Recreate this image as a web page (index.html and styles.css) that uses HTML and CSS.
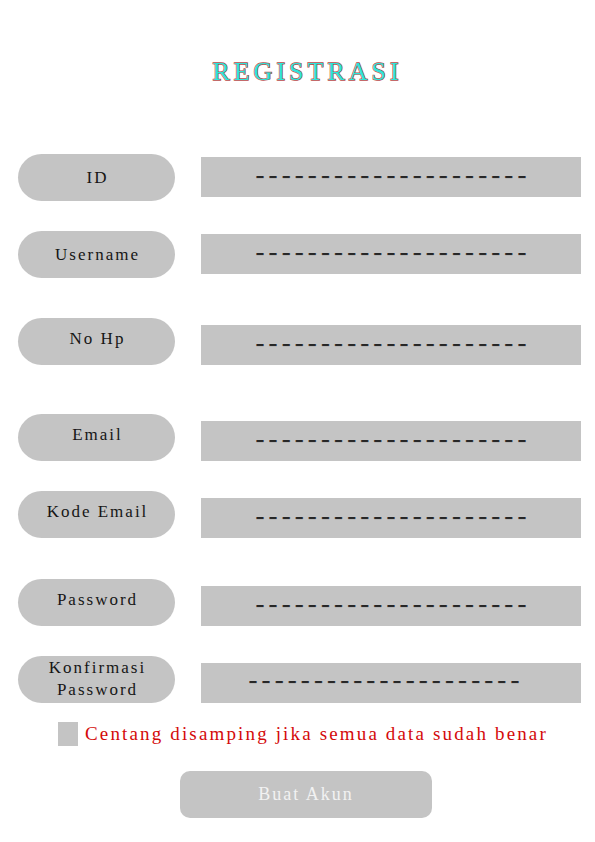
FILE: index.html
```html
<!DOCTYPE html>
<html lang="id">
<head>
    <meta charset="UTF-8">
    <meta name="viewport" content="width=device-width, initial-scale=1.0">
    <title>Registrasi</title>
    <link rel="stylesheet" href="styles.css">
</head>
<body>
    <h1 class="title">REGISTRASI</h1>

    <form class="form">
        <div class="row row-first row-short">
            <div class="label">ID</div>
            <div class="field">–––––––––––––––––––––</div>
        </div>
        <div class="row row-near row-short">
            <div class="label">Username</div>
            <div class="field">–––––––––––––––––––––</div>
        </div>
        <div class="row row-mid">
            <div class="label label-up">No Hp</div>
            <div class="field">–––––––––––––––––––––</div>
        </div>
        <div class="row row-far">
            <div class="label label-up">Email</div>
            <div class="field">–––––––––––––––––––––</div>
        </div>
        <div class="row row-near">
            <div class="label label-up">Kode Email</div>
            <div class="field">–––––––––––––––––––––</div>
        </div>
        <div class="row row-mid row-pass">
            <div class="label label-up">Password</div>
            <div class="field">–––––––––––––––––––––</div>
        </div>
        <div class="row row-near">
            <div class="label label-two">Konfirmasi<br>Password</div>
            <div class="field field-left">–––––––––––––––––––––</div>
        </div>

        <div class="check">
            <span class="box"></span>
            <span class="check-text">Centang disamping jika semua data sudah benar</span>
        </div>

        <div class="actions">
            <button type="button" class="btn">Buat Akun</button>
        </div>
    </form>
</body>
</html>
```

FILE: styles.css
```css
body {
    margin: 0;
    background: #ffffff;
    font-family: "Liberation Serif", "DejaVu Serif", serif;
}

.title {
    margin: 0;
    padding: 57px 0 0 20px;
    height: 33px;
    text-align: center;
    font-size: 26px;
    font-weight: normal;
    letter-spacing: 4px;
    color: #30e3d9;
    -webkit-text-stroke: 1.3px #b94848;
    paint-order: stroke fill;
}

.form {
    padding: 0 14px 0 18px;
}

.row {
    display: flex;
    align-items: flex-end;
    justify-content: space-between;
}

.row-first { margin-top: 64px; }
.row-near { margin-top: 30px; }
.row-mid { margin-top: 40px; }
.row-far { margin-top: 49px; }
.row-pass { margin-top: 41px; }

.label {
    width: 157px;
    height: 47px;
    border-radius: 24px;
    background: #c4c4c4;
    display: flex;
    align-items: center;
    justify-content: center;
    color: #161616;
    font-size: 17px;
    letter-spacing: 2px;
    padding-left: 2px;
    box-sizing: border-box;
}

.label-up {
    padding-bottom: 6px;
}

.label-two {
    text-align: center;
    line-height: 22px;
    padding-bottom: 2px;
}

.field {
    width: 380px;
    height: 40px;
    background: #c4c4c4;
    display: flex;
    align-items: center;
    justify-content: center;
    color: #262626;
    font-size: 14px;
    font-weight: bold;
    letter-spacing: 6.1px;
    padding: 0 0 3px 6px;
    box-sizing: border-box;
    text-shadow: 0 1px 0 #2a2a2a;
}

.row-short .field {
    margin-bottom: 4px;
}

.field-left {
    padding: 0 8px 5px 0;
}

.check {
    display: flex;
    align-items: center;
    margin: 19px 0 0 40px;
}

.box {
    width: 20px;
    height: 24px;
    background: #c4c4c4;
}

.check-text {
    margin-left: 7px;
    color: #d40a0a;
    font-size: 19px;
    letter-spacing: 2.15px;
}

.actions {
    display: flex;
    justify-content: center;
    margin-top: 25px;
    padding-left: 13px;
}

.btn {
    width: 252px;
    height: 47px;
    border: none;
    border-radius: 10px;
    background: #c4c4c4;
    color: #f2f2f2;
    font-family: "Liberation Serif", "DejaVu Serif", serif;
    font-size: 18px;
    letter-spacing: 2px;
}
```
